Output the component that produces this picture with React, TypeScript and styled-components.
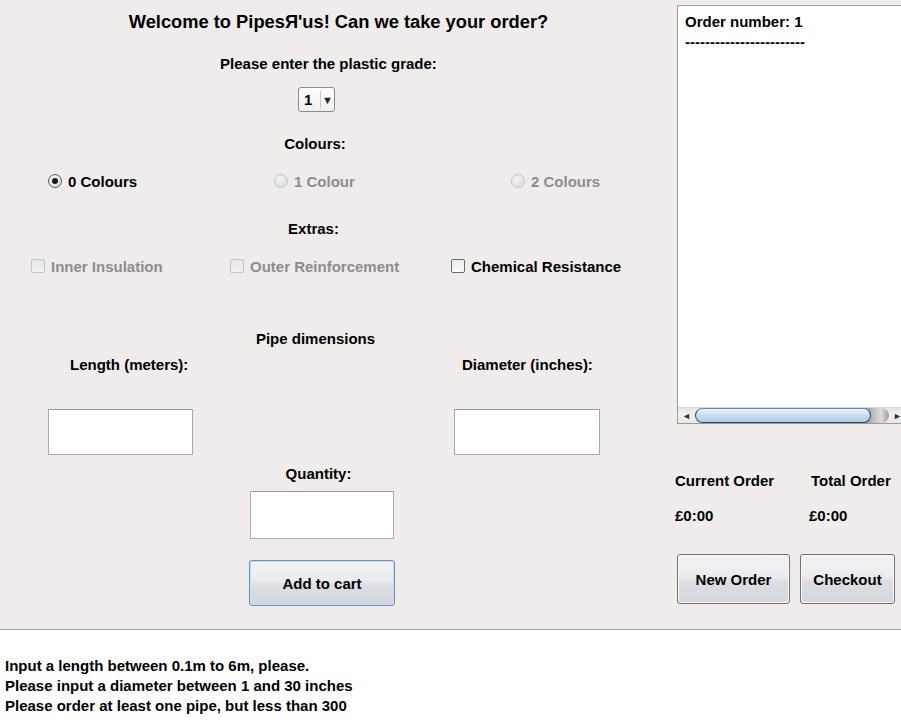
import React from "react";
import styled, { createGlobalStyle } from "styled-components";

const Global = createGlobalStyle`
  html, body { margin: 0; padding: 0; background: #ffffff; }
  body { font-family: "Liberation Sans", Arial, sans-serif; font-weight: bold; font-size: 15px; color: #000; }
  * { box-sizing: border-box; }
`;

const Page = styled.div`
  width: 901px;
  height: 722px;
  overflow: hidden;
  display: flex;
  flex-direction: column;
`;

const Top = styled.div`
  height: 630px;
  display: flex;
  background: #efeceb;
  border-bottom: 1px solid #a0a0a0;
`;

const LeftPanel = styled.div`
  width: 670px;
  flex: none;
  display: flex;
  flex-direction: column;
`;

const RightPanel = styled.div`
  flex: 1;
  min-width: 0;
  overflow: hidden;
  display: flex;
  flex-direction: column;
`;

const Row = styled.div<{ $h: number; $mt: number; $cx?: number; $pl?: number }>`
  height: ${(p) => p.$h}px;
  margin-top: ${(p) => p.$mt}px;
  display: flex;
  align-items: center;
  justify-content: ${(p) => (p.$cx !== undefined ? "center" : "flex-start")};
  padding-left: ${(p) =>
    p.$cx !== undefined ? Math.max(0, 2 * p.$cx - 670) : p.$pl ?? 0}px;
  padding-right: ${(p) => (p.$cx !== undefined ? Math.max(0, 670 - 2 * p.$cx) : 0)}px;
  white-space: nowrap;
`;

const Title = styled.span`
  font-size: 18.3px;
`;

const Label = styled.span<{ $disabled?: boolean }>`
  color: ${(p) => (p.$disabled ? "#8d8d8d" : "#000")};
`;

const Combo = styled.div`
  width: 37px;
  height: 25px;
  border: 1px solid #8a8a8a;
  border-radius: 3px;
  background: linear-gradient(#fdfdfd, #f0f0f0);
  display: flex;
  align-items: center;
  font-size: 15px;
`;

const ComboValue = styled.span`
  width: 22px;
  padding-left: 5px;
  border-right: 1px solid #c8c8c8;
  height: 17px;
  line-height: 17px;
`;

const ComboArrow = styled.span`
  flex: 1;
  text-align: center;
  font-size: 11px;
  color: #222;
`;

const OptionGrid = styled.div<{ $cols: string; $pl: number; $mt: number }>`
  display: grid;
  grid-template-columns: ${(p) => p.$cols};
  padding-left: ${(p) => p.$pl}px;
  margin-top: ${(p) => p.$mt}px;
  height: 20px;
  align-items: center;
  white-space: nowrap;
`;

const Option = styled.label`
  display: flex;
  align-items: center;
  gap: 6px;
`;

const RadioDot = styled.span<{ $checked?: boolean; $disabled?: boolean }>`
  width: 14px;
  height: 14px;
  border-radius: 50%;
  border: 1px solid ${(p) => (p.$disabled ? "#c6c6c6" : "#5a5a5a")};
  background: ${(p) =>
    p.$disabled
      ? "radial-gradient(circle at 40% 35%, #f4f4f4, #d8d8d8)"
      : "radial-gradient(circle at 40% 35%, #ffffff, #cfcfcf)"};
  display: flex;
  align-items: center;
  justify-content: center;
  &::after {
    content: "";
    display: ${(p) => (p.$checked ? "block" : "none")};
    width: 6px;
    height: 6px;
    border-radius: 50%;
    background: #1a1a1a;
  }
`;

const CheckBox = styled.span<{ $disabled?: boolean }>`
  width: 14px;
  height: 14px;
  border-radius: 2px;
  border: 1px solid ${(p) => (p.$disabled ? "#c4c4c4" : "#6a6a6a")};
  background: ${(p) =>
    p.$disabled ? "linear-gradient(#e6e6e6, #f2f2f2)" : "linear-gradient(#ececec, #fafafa)"};
`;

const TwoCol = styled.div<{ $cols: string; $pl: number; $mt: number; $h: number }>`
  display: grid;
  grid-template-columns: ${(p) => p.$cols};
  padding-left: ${(p) => p.$pl}px;
  margin-top: ${(p) => p.$mt}px;
  height: ${(p) => p.$h}px;
  align-items: center;
  white-space: nowrap;
`;

const TextField = styled.div<{ $w: number; $h: number }>`
  width: ${(p) => p.$w}px;
  height: ${(p) => p.$h}px;
  background: #fff;
  border: 1px solid #ababab;
  border-top-color: #9a9a9a;
`;

const Button = styled.button<{ $w: number; $h: number; $focus?: boolean }>`
  width: ${(p) => p.$w}px;
  height: ${(p) => p.$h}px;
  font-family: "Liberation Sans", Arial, sans-serif;
  font-weight: bold;
  font-size: 15px;
  color: #000;
  border-radius: 3px;
  border: 1px solid ${(p) => (p.$focus ? "#5f93c8" : "#707070")};
  box-shadow: ${(p) => (p.$focus ? "inset 0 0 0 1px #c9ddf0" : "inset 0 0 0 1px #fbfbfb")};
  background: linear-gradient(#f3f3f5 0%, #eaebee 45%, #dcdee3 55%, #d3d6dc 100%);
  padding: 0;
`;

const TextArea = styled.div`
  margin-top: 5px;
  margin-left: 7px;
  width: 230px;
  height: 419px;
  background: #fff;
  border: 1px solid #9c9c9c;
  display: flex;
  flex-direction: column;
`;

const AreaText = styled.div`
  flex: 1;
  padding: 6px 0 0 7px;
  line-height: 20px;
  white-space: pre;
`;

const ScrollBar = styled.div`
  height: 16px;
  display: flex;
  align-items: stretch;
  background: linear-gradient(#e4e4e4, #f2f2f2 40%, #e8e8e8);
  border-top: 1px solid #d6d6d6;
`;

const ScrollArrow = styled.div`
  width: 17px;
  display: flex;
  align-items: center;
  justify-content: center;
  font-size: 9px;
  color: #333;
`;

const Thumb = styled.div`
  width: 176px;
  border: 1px solid #2f4a63;
  border-top-color: #6d8aa5;
  border-radius: 9px;
  background: linear-gradient(#eaf3fb, #c9dcee 50%, #b5cde4);
  position: relative;
  z-index: 1;
`;

const ThumbTail = styled.div`
  width: 26px;
  margin-left: -8px;
  background: linear-gradient(90deg, #7d7d7d, #b9b9b9 35%, #dcdcdc 70%, #9a9a9a);
  border-radius: 0 8px 8px 0;
`;

const Totals = styled.div`
  display: grid;
  grid-template-columns: 136px auto;
  row-gap: 15px;
  margin-top: 47px;
  padding-left: 5px;
  line-height: 20px;
  white-space: nowrap;
`;

const Money = styled.span<{ $shift?: number }>`
  margin-left: ${(p) => p.$shift ?? 0}px;
`;

const ButtonRow = styled.div`
  display: flex;
  gap: 10px;
  margin-top: 28px;
  padding-left: 7px;
`;

const Bottom = styled.div`
  flex: 1;
  background: #fff;
  padding: 26px 0 0 5px;
  line-height: 20px;
  white-space: nowrap;
`;

export default function App() {
  return (
    <Page>
      <Global />
      <Top>
        <LeftPanel>
          <Row $h={24} $mt={10} $cx={338.5}>
            <Title>Welcome to PipesЯ'us! Can we take your order?</Title>
          </Row>
          <Row $h={20} $mt={19} $cx={328.5}>
            <Label>Please enter the plastic grade:</Label>
          </Row>
          <Row $h={25} $mt={14} $pl={298}>
            <Combo>
              <ComboValue>1</ComboValue>
              <ComboArrow>▼</ComboArrow>
            </Combo>
          </Row>
          <Row $h={20} $mt={21} $cx={315}>
            <Label>Colours:</Label>
          </Row>
          <OptionGrid $cols="226px 237px auto" $pl={48} $mt={18}>
            <Option>
              <RadioDot $checked />
              <Label>0 Colours</Label>
            </Option>
            <Option>
              <RadioDot $disabled />
              <Label $disabled>1 Colour</Label>
            </Option>
            <Option>
              <RadioDot $disabled />
              <Label $disabled>2 Colours</Label>
            </Option>
          </OptionGrid>
          <Row $h={20} $mt={27} $cx={313.5}>
            <Label>Extras:</Label>
          </Row>
          <OptionGrid $cols="199px 221px auto" $pl={31} $mt={18}>
            <Option>
              <CheckBox $disabled />
              <Label $disabled>Inner Insulation</Label>
            </Option>
            <Option>
              <CheckBox $disabled />
              <Label $disabled>Outer Reinforcement</Label>
            </Option>
            <Option>
              <CheckBox />
              <Label>Chemical Resistance</Label>
            </Option>
          </OptionGrid>
          <Row $h={20} $mt={52} $cx={315.5}>
            <Label>Pipe dimensions</Label>
          </Row>
          <TwoCol $cols="392px auto" $pl={70} $mt={6} $h={20}>
            <Label>Length (meters):</Label>
            <Label>Diameter (inches):</Label>
          </TwoCol>
          <TwoCol $cols="406px auto" $pl={48} $mt={35} $h={46}>
            <TextField $w={145} $h={46} />
            <TextField $w={146} $h={46} />
          </TwoCol>
          <Row $h={20} $mt={8} $cx={318.5}>
            <Label>Quantity:</Label>
          </Row>
          <Row $h={48} $mt={8} $pl={250}>
            <TextField $w={144} $h={48} />
          </Row>
          <Row $h={46} $mt={21} $pl={249}>
            <Button $w={146} $h={46} $focus>
              Add to cart
            </Button>
          </Row>
        </LeftPanel>
        <RightPanel>
          <TextArea>
            <AreaText>{"Order number: 1\n------------------------"}</AreaText>
            <ScrollBar>
              <ScrollArrow>◄</ScrollArrow>
              <Thumb />
              <ThumbTail />
              <ScrollArrow>►</ScrollArrow>
            </ScrollBar>
          </TextArea>
          <Totals>
            <span>Current Order</span>
            <span>Total Order</span>
            <Money>£0:00</Money>
            <Money $shift={-2}>£0:00</Money>
          </Totals>
          <ButtonRow>
            <Button $w={113} $h={50}>
              New Order
            </Button>
            <Button $w={95} $h={50}>
              Checkout
            </Button>
          </ButtonRow>
        </RightPanel>
      </Top>
      <Bottom>
        <div>Input a length between 0.1m to 6m, please.</div>
        <div>Please input a diameter between 1 and 30 inches</div>
        <div>Please order at least one pipe, but less than 300</div>
      </Bottom>
    </Page>
  );
}
